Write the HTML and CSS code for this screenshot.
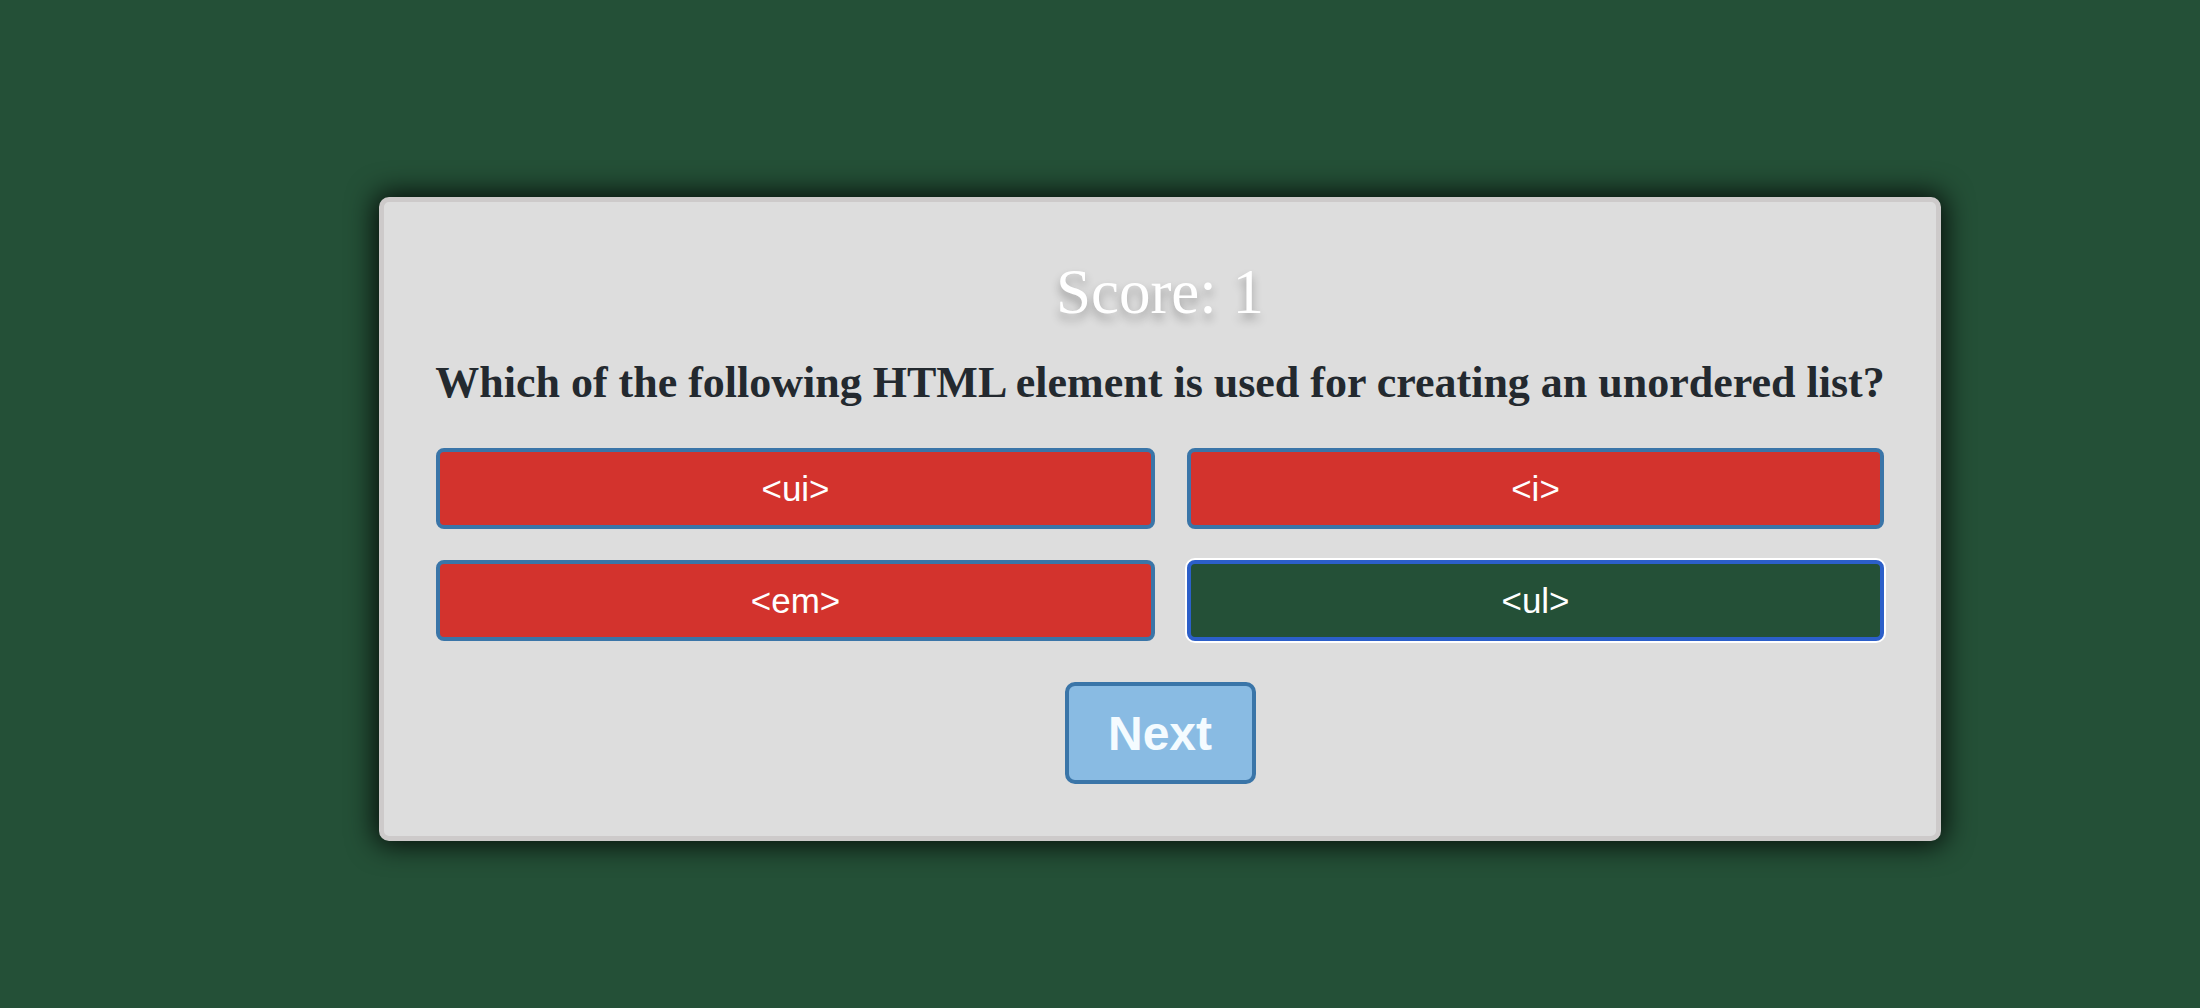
FILE: index.html
```html
<!DOCTYPE html>
<html lang="en">
<head>
<meta charset="utf-8">
<title>Quiz</title>
<link rel="stylesheet" href="styles.css">
</head>
<body>
<main class="stage">
  <section class="card">
    <h1 class="score">Score: 1</h1>
    <h2 class="question">Which of the following HTML element is used for creating an unordered list?</h2>
    <div class="answers">
      <button class="answer wrong">&lt;ui&gt;</button>
      <button class="answer wrong">&lt;i&gt;</button>
      <button class="answer wrong">&lt;em&gt;</button>
      <button class="answer right">&lt;ul&gt;</button>
    </div>
    <div class="controls">
      <button class="next">Next</button>
    </div>
  </section>
</main>
</body>
</html>
```

FILE: styles.css
```css
html, body {
  margin: 0;
  padding: 0;
  background: #245037;
  height: 100%;
}

.stage {
  display: flex;
  align-items: flex-start;
  padding: 197px 0 0 379px;
}

.card {
  box-sizing: border-box;
  width: 1562px;
  height: 644px;
  background: #dddddd;
  border: 5px solid #cdcaca;
  border-radius: 10px;
  box-shadow: 0 0 28px 4px rgba(0, 0, 0, 0.85);
  padding: 0 52px;
  display: flex;
  flex-direction: column;
}

.score {
  margin: 54px 0 0;
  text-align: center;
  font-family: "Liberation Serif", "Times New Roman", serif;
  font-weight: normal;
  font-size: 63px;
  line-height: 72px;
  color: #ffffff;
  text-shadow: 0 6px 10px rgba(0, 0, 0, 0.3);
}

.question {
  margin: 29px -10px 0;
  text-align: center;
  white-space: nowrap;
  font-family: "Liberation Serif", "Times New Roman", serif;
  font-weight: bold;
  font-size: 44px;
  line-height: 52px;
  color: #23292f;
}

.answers {
  margin-top: 39px;
  display: grid;
  grid-template-columns: 719fr 697fr;
  column-gap: 32px;
  row-gap: 31px;
}

.answer {
  box-sizing: border-box;
  height: 81px;
  border: 4px solid #3a75a8;
  border-radius: 8px;
  font-family: "Liberation Sans", Arial, sans-serif;
  font-size: 35px;
  color: #ffffff;
  padding: 0;
}

.wrong {
  background: #d3332d;
}

.right {
  background: #245037;
  border-color: #2c5fc9;
  box-shadow: 0 0 0 2px #ffffff;
}

.controls {
  display: flex;
  justify-content: center;
  margin-top: 41px;
}

.next {
  box-sizing: border-box;
  width: 191px;
  height: 102px;
  background: #89bbe3;
  border: 4px solid #3a75a8;
  border-radius: 10px;
  font-family: "Liberation Sans", Arial, sans-serif;
  font-weight: bold;
  font-size: 48px;
  color: #f4fbff;
  padding: 0;
}
```
